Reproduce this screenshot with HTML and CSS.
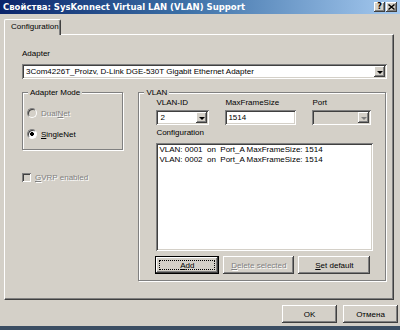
FILE: index.html
```html
<!DOCTYPE html>
<html lang="ru">
<head>
  <meta charset="UTF-8">
  <title>Свойства: SysKonnect Virtual LAN (VLAN) Support</title>
  <link rel="stylesheet" href="styles.css">
</head>
<body>
  <div class="window">
    <div class="titlebar">
      <span class="title">Свойства: SysKonnect Virtual LAN (VLAN) Support</span>
      <div class="caption-btns">
        <span class="cap-btn">?</span>
        <span class="cap-btn">
          <svg width="7" height="6" viewBox="0 0 7 6"><path d="M0.5 0.5 L6.5 5.5 M6.5 0.5 L0.5 5.5" stroke="#000" stroke-width="1.4"/></svg>
        </span>
      </div>
    </div>

    <div class="client">
      <div class="tabs">
        <div class="tab">Configuration</div>
      </div>

      <div class="panel">
        <div class="label">Adapter</div>
        <div class="combo adapter-combo">
          <span class="combo-text">3Com4226T_Proizv, D-Link DGE-530T Gigabit Ethernet Adapter</span>
          <span class="combo-arrow"><span class="tri"></span></span>
        </div>

        <div class="columns">
          <div class="left-col">
            <div class="group mode-group">
              <span class="legend">Adapter Mode</span>
              <div class="radio disabled"><span class="radio-dot"></span><span>Dual<u>N</u>et</span></div>
              <div class="radio"><span class="radio-dot checked"></span><span><u>S</u>ingleNet</span></div>
            </div>
            <div class="check disabled"><span class="check-box"></span><span><u>G</u>VRP enabled</span></div>
          </div>

          <div class="group vlan-group">
            <span class="legend">VLAN</span>
            <div class="fields">
              <div class="field">
                <div class="label">VLAN-ID</div>
                <div class="combo id-combo">
                  <span class="combo-text">2</span>
                  <span class="combo-arrow"><span class="tri"></span></span>
                </div>
              </div>
              <div class="field">
                <div class="label">MaxFrameSize</div>
                <div class="edit size-edit">1514</div>
              </div>
              <div class="field">
                <div class="label">Port</div>
                <div class="combo port-combo off">
                  <span class="combo-text"></span>
                  <span class="combo-arrow"><span class="tri"></span></span>
                </div>
              </div>
            </div>

            <div class="label config-label">Configuration</div>
            <div class="listbox">
              <div class="list-item">VLAN: 0001  on  Port_A MaxFrameSize: 1514</div>
              <div class="list-item">VLAN: 0002  on  Port_A MaxFrameSize: 1514</div>
            </div>

            <div class="vlan-buttons">
              <div class="btn default add-btn"><span class="focus"><u>A</u>dd</span></div>
              <div class="btn disabled delete-btn"><span><u>D</u>elete selected</span></div>
              <div class="btn setdef-btn"><span><u>S</u>et default</span></div>
            </div>
          </div>
        </div>
      </div>

      <div class="footer">
        <div class="btn dlg-btn">OK</div>
        <div class="btn dlg-btn">Отмена</div>
      </div>
    </div>
    <div class="strip"></div>
  </div>
</body>
</html>
```

FILE: styles.css
```css
* {
  box-sizing: border-box;
}

body {
  margin: 0;
  font-family: "Liberation Sans", Arial, sans-serif;
  font-size: 8px;
  color: #000;
}

.window {
  width: 400px;
  height: 330px;
  background: #d4d0c8;
  display: flex;
  flex-direction: column;
  overflow: hidden;
}

/* title bar */
.titlebar {
  height: 14px;
  flex: none;
  background: linear-gradient(to right, #0a246a, #3a6ea5 45%, #a6caf0);
  display: flex;
  align-items: center;
  justify-content: space-between;
  padding: 0 3px 0 3px;
}

.title {
  color: #fff;
  font-family: "DejaVu Sans", sans-serif;
  font-weight: bold;
  font-size: 8.5px;
  white-space: nowrap;
}

.caption-btns {
  display: flex;
  gap: 1px;
}

.cap-btn {
  width: 11px;
  height: 10px;
  background: #d4d0c8;
  box-shadow: inset -1px -1px #404040, inset 1px 1px #fff, inset -2px -2px #808080;
  display: flex;
  align-items: center;
  justify-content: center;
  font-family: "DejaVu Sans", sans-serif;
  font-weight: bold;
  font-size: 8px;
  line-height: 10px;
}

/* client area */
.client {
  flex: 1;
  display: flex;
  flex-direction: column;
  padding-left: 4px;
}

.tabs {
  height: 20px;
  display: flex;
  align-items: flex-end;
}

.tab {
  height: 16px;
  width: 57px;
  margin-bottom: -1px;
  padding-left: 6px;
  line-height: 14px;
  background: #d4d0c8;
  border-top: 1px solid #fff;
  border-left: 1px solid #fff;
  border-right: 1px solid #404040;
  border-radius: 2px 2px 0 0;
  box-shadow: inset -1px 0 #808080;
  position: relative;
  z-index: 1;
}

.panel {
  width: 390px;
  height: 266px;
  border: 1px solid;
  border-color: #fff #404040 #404040 #fff;
  box-shadow: inset -1px -1px #808080;
  padding: 14px 7px 0 17px;
}

.label {
  height: 10px;
  line-height: 10px;
  white-space: nowrap;
}

/* sunken controls */
.combo,
.edit,
.listbox {
  background: #fff;
  box-shadow: inset 1px 1px #808080, inset -1px -1px #fff, inset 2px 2px #404040, inset -2px -2px #d4d0c8;
}

.combo {
  height: 15px;
  display: flex;
  align-items: center;
  padding: 2px;
}

.combo-text {
  flex: 1;
  padding-left: 2px;
  white-space: nowrap;
  overflow: hidden;
}

.combo-arrow {
  width: 11px;
  height: 11px;
  background: #d4d0c8;
  box-shadow: inset -1px -1px #404040, inset 1px 1px #fff, inset -2px -2px #808080;
  display: flex;
  align-items: center;
  justify-content: center;
}

.tri {
  width: 0;
  height: 0;
  border-left: 3px solid transparent;
  border-right: 3px solid transparent;
  border-top: 3px solid #000;
  margin-top: 1px;
}

.combo.off {
  background: #d4d0c8;
}

.combo.off .tri {
  border-top-color: #808080;
}

.adapter-combo {
  margin-top: 5px;
  width: 365px;
}

.columns {
  display: flex;
  gap: 15px;
  margin-top: 7px;
}

/* group boxes */
.group {
  position: relative;
  margin-top: 6px;
  border: 1px solid #808080;
  box-shadow: inset 1px 1px #fff, 1px 1px #fff;
}

.legend {
  position: absolute;
  top: -6px;
  left: 5px;
  padding: 0 2px;
  line-height: 11px;
  background: #d4d0c8;
  white-space: nowrap;
}

.left-col {
  width: 102px;
}

.mode-group {
  height: 58px;
  padding: 14px 0 0 4px;
}

.radio,
.check {
  height: 12px;
  display: flex;
  align-items: center;
  gap: 4px;
  white-space: nowrap;
}

.radio + .radio {
  margin-top: 9px;
}

.radio-dot {
  width: 10px;
  height: 10px;
  border-radius: 50%;
  background: #fff;
  border: 1px solid;
  border-color: #808080 #fff #fff #808080;
  box-shadow: inset 1px 1px #404040;
}

.radio-dot.checked {
  background: radial-gradient(circle, #000 1.6px, #fff 2.2px);
}

.disabled {
  color: #808080;
  text-shadow: 1px 1px #fff;
}

.radio.disabled .radio-dot {
  background: #d4d0c8;
}

.check {
  margin-top: 21px;
}

.check-box {
  width: 9px;
  height: 9px;
  background: #d4d0c8;
  box-shadow: inset 1px 1px #808080, inset -1px -1px #fff, inset 2px 2px #404040, inset -2px -2px #d4d0c8;
}

.vlan-group {
  width: 249px;
  height: 189px;
  padding: 5px 0 0 17px;
}

.fields {
  display: flex;
  gap: 16px;
}

.field .label {
  margin-bottom: 2px;
}

.id-combo {
  width: 53px;
}

.size-edit {
  width: 71px;
  height: 15px;
  line-height: 15px;
  padding-left: 3px;
}

.port-combo {
  width: 59px;
}

.config-label {
  margin-top: 3px;
}

.listbox {
  width: 217px;
  height: 108px;
  margin-top: 5px;
  padding: 2px;
}

.list-item {
  height: 10px;
  line-height: 10px;
  padding-left: 1px;
  white-space: pre;
}

/* push buttons */
.btn {
  height: 18px;
  background: #d4d0c8;
  box-shadow: inset -1px -1px #404040, inset 1px 1px #fff, inset -2px -2px #808080;
  display: flex;
  align-items: center;
  justify-content: center;
  white-space: nowrap;
}

.vlan-buttons {
  display: flex;
  gap: 4px;
  margin-top: 5px;
  margin-left: -1px;
}

.add-btn {
  width: 64px;
}

.delete-btn {
  width: 71px;
}

.setdef-btn {
  width: 72px;
}

.btn.default {
  border: 1px solid #000;
  box-shadow: inset -1px -1px #404040, inset 1px 1px #fff, inset -2px -2px #808080;
}

.focus {
  flex: 1;
  align-self: stretch;
  margin: 3px;
  border: 1px dotted #000;
  display: flex;
  align-items: center;
  justify-content: center;
}

.footer {
  display: flex;
  justify-content: flex-end;
  gap: 6px;
  margin-top: 5px;
  padding-right: 2px;
}

.dlg-btn {
  width: 55px;
}

.strip {
  height: 4px;
  flex: none;
  background: #3b4e63;
}
```
